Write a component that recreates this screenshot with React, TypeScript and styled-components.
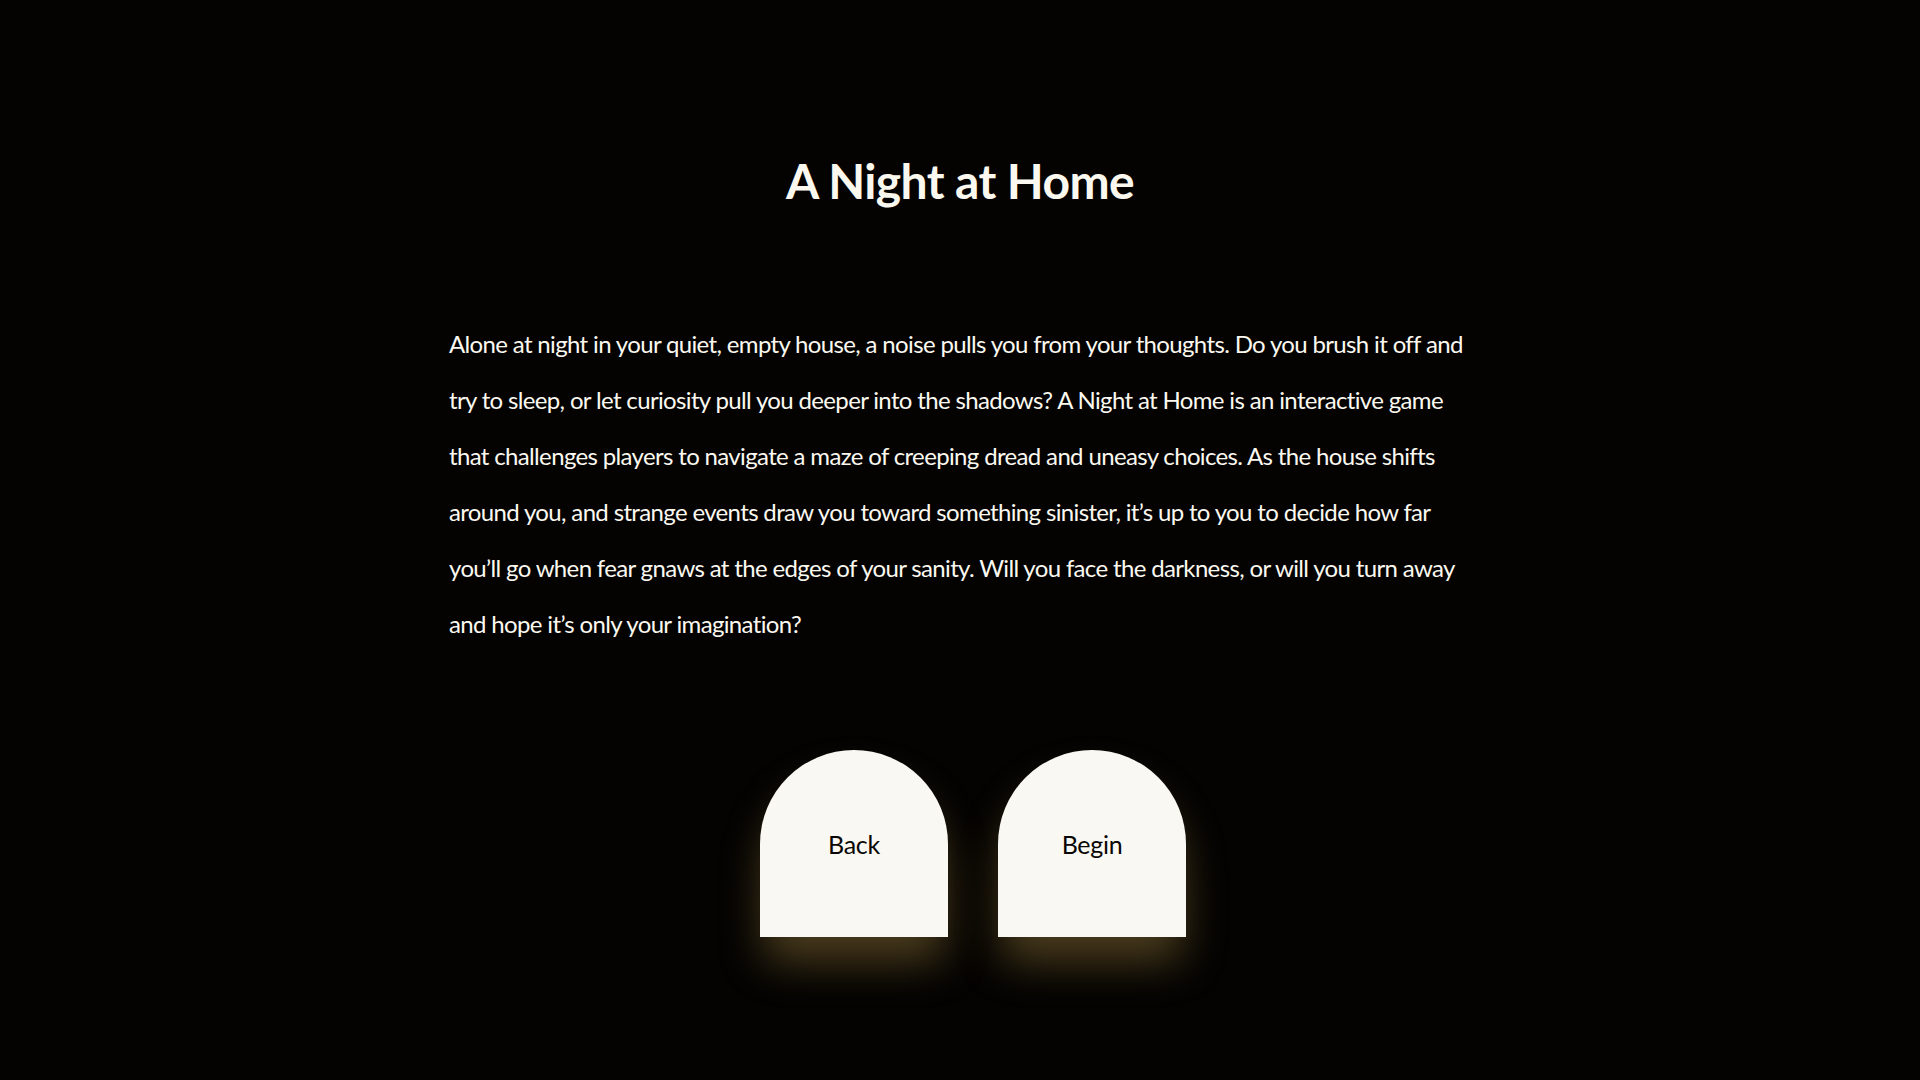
import React from "react";
import styled, { createGlobalStyle } from "styled-components";

const Global = createGlobalStyle`
  html, body { margin: 0; padding: 0; background: #040302; }
  body { font-family: Lato, "Open Sans", sans-serif; color: #fbf8f0; }
`;

const Page = styled.main`
  min-height: 1080px;
  display: flex;
  flex-direction: column;
  align-items: center;
  padding-top: 151px;
  box-sizing: border-box;
`;

const Title = styled.h1`
  margin: 0;
  font-family: Lato, sans-serif;
  font-weight: 700;
  font-size: 48px;
  line-height: 60px;
  letter-spacing: -0.6px;
  color: #fbf8f0;
`;

const Story = styled.p`
  margin: 105px 0 0;
  width: 1022px;
  font-size: 24px;
  line-height: 56px;
  letter-spacing: -0.65px;
  color: #fbf8f0;
`;

const Line = styled.span`
  display: block;
  white-space: nowrap;
`;

const Actions = styled.div`
  display: flex;
  gap: 50px;
  margin-top: 98px;
  margin-left: 26px;
`;

const ArchButton = styled.button`
  width: 188px;
  height: 187px;
  border: none;
  border-radius: 94px 94px 0 0;
  background: #faf8f2;
  color: #0a0806;
  font-family: Lato, sans-serif;
  font-size: 25px;
  letter-spacing: -0.3px;
  display: flex;
  align-items: center;
  justify-content: center;
  box-shadow: 0 28px 44px -4px rgba(205, 165, 80, 0.36);
  cursor: pointer;
`;

const lines = [
  "Alone at night in your quiet, empty house, a noise pulls you from your thoughts. Do you brush it off and",
  "try to sleep, or let curiosity pull you deeper into the shadows? A Night at Home is an interactive game",
  "that challenges players to navigate a maze of creeping dread and uneasy choices. As the house shifts",
  "around you, and strange events draw you toward something sinister, it\u2019s up to you to decide how far",
  "you\u2019ll go when fear gnaws at the edges of your sanity. Will you face the darkness, or will you turn away",
  "and hope it\u2019s only your imagination?",
];

export default function App() {
  return (
    <>
      <Global />
      <Page>
        <Title>A Night at Home</Title>
        <Story>
          {lines.map((l) => (
            <Line key={l}>{l}</Line>
          ))}
        </Story>
        <Actions>
          <ArchButton>Back</ArchButton>
          <ArchButton>Begin</ArchButton>
        </Actions>
      </Page>
    </>
  );
}
